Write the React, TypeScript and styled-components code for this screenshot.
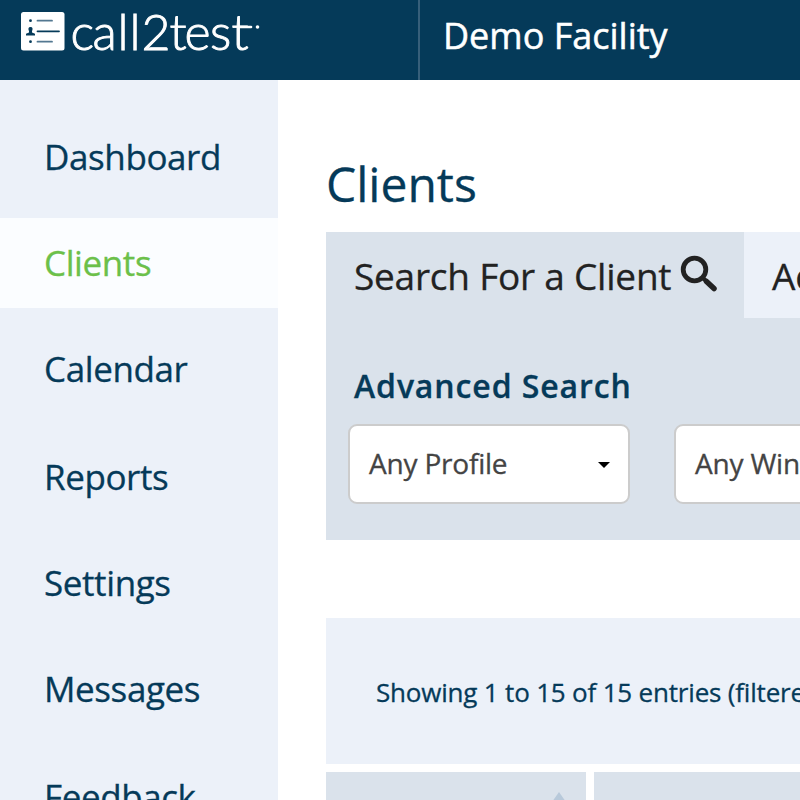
import React from "react";
import styled, { createGlobalStyle } from "styled-components";

const navy = "#053a59";
const pale = "#ecf1f9";
const steel = "#dae2eb";

const GlobalStyle = createGlobalStyle`
  * { box-sizing: border-box; }
  body {
    margin: 0;
    overflow: hidden;
    background: #fff;
    font-family: "Open Sans", "Noto Sans", sans-serif;
    color: ${navy};
    -webkit-text-stroke: 0.3px currentColor;
  }
`;

const Page = styled.div`
  width: 800px;
  height: 800px;
  overflow: hidden;
  display: flex;
  flex-direction: column;
`;

const Header = styled.header`
  display: flex;
  flex: 0 0 80px;
  background: ${navy};
`;

const Brand = styled.div`
  flex: 0 0 418px;
`;

const LogoMark = styled.svg`
  display: block;
`;

const Facility = styled.div`
  flex: 1;
  border-left: 2px solid #375f7a;
  padding: 11px 0 0 23px;
  color: #fff;
  font-size: 36px;
  line-height: 49px;
  -webkit-text-stroke-width: 0.5px;
  white-space: nowrap;
`;

const Body = styled.div`
  display: flex;
  flex: 1;
  min-height: 0;
`;

const Sidebar = styled.nav`
  flex: 0 0 278px;
  padding-top: 32px;
  background: ${pale};
  display: flex;
  flex-direction: column;
`;

const NavItem = styled.a<{ $active?: boolean; $gap?: number }>`
  flex: 0 0 90px;
  height: 90px;
  margin-bottom: ${(p) => p.$gap ?? 16}px;
  padding-left: 44px;
  font-size: 35px;
  letter-spacing: -0.4px;
  line-height: 90px;
  color: ${(p) => (p.$active ? "#6cc04a" : navy)};
  background: ${(p) => (p.$active ? "#fbfdff" : "transparent")};
`;

const Main = styled.main`
  flex: 0 0 auto;
  width: 900px;
  padding: 72px 0 0 48px;
`;

const Title = styled.h1`
  margin: 0;
  height: 80px;
  font-size: 48px;
  line-height: 64px;
  font-weight: 400;
`;

const SearchPanel = styled.section`
  height: 308px;
  background: ${steel};
`;

const Tabs = styled.div`
  display: flex;
  height: 86px;
  color: #222;
  font-size: 37px;
  letter-spacing: -0.23px;
  line-height: 87px;
  white-space: nowrap;
`;

const Tab = styled.div<{ $active?: boolean }>`
  display: flex;
  align-items: flex-start;
  flex: 0 0 418px;
  height: 86px;
  padding-left: 28px;
  background: ${(p) => (p.$active ? steel : pale)};
`;

const SearchIcon = styled.svg`
  margin: 23px 0 0 9px;
  width: 38px;
  height: 38px;
`;

const SubTitle = styled.h2`
  margin: 0;
  padding: 46px 0 0 28px;
  height: 106px;
  font-size: 32px;
  line-height: 44px;
  font-weight: 600;
  letter-spacing: 0.9px;
`;

const Filters = styled.div`
  display: flex;
  gap: 44px;
  padding-left: 22px;
`;

const Select = styled.div`
  display: flex;
  align-items: center;
  justify-content: space-between;
  width: 282px;
  height: 80px;
  padding: 0 18px 2px 19px;
  border: 2px solid #ccc;
  border-radius: 9px;
  background: #fff;
  color: #444;
  font-size: 28px;
  letter-spacing: -0.2px;
  white-space: nowrap;
`;

const Caret = styled.i`
  margin-top: 3px;
  border: 6px solid transparent;
  border-top-color: #000;
  border-bottom: 0;
`;

const Summary = styled.div`
  height: 146px;
  margin: 78px 0 8px;
  padding-left: 50px;
  background: ${pale};
  font-size: 26px;
  letter-spacing: -0.19px;
  line-height: 149px;
  white-space: nowrap;
`;

const Columns = styled.div`
  display: flex;
  gap: 8px;
`;

const Column = styled.div`
  display: flex;
  justify-content: flex-end;
  width: 260px;
  height: 60px;
  padding: 20px 20px 0 0;
  background: ${steel};
`;

const SortArrow = styled.i`
  width: 0;
  height: 0;
  border: 7px solid transparent;
  border-bottom: 10px solid #b8c9da;
  border-top: 0;
`;

const links = [
  { label: "Dashboard" },
  { label: "Clients", active: true },
  { label: "Calendar", gap: 18 },
  { label: "Reports" },
  { label: "Settings" },
  { label: "Messages", gap: 18 },
  { label: "Feedback" },
];

function Logo() {
  return (
    <LogoMark width="280" height="80" viewBox="0 0 280 80" aria-label="call2test">
      <rect x="21" y="12" width="43.5" height="38.5" rx="2.5" fill="#fff" />
      <g stroke={navy} strokeWidth="1.8" strokeLinecap="round">
        <path d="M37.5 20.7H52M37.5 41.7H52" stroke="#537891" />
        <path d="M37.5 31.3H59" />
      </g>
      <g fill={navy}>
        <circle cx="30.5" cy="20.7" r="1.4" />
        <circle cx="30.5" cy="41.7" r="1.4" />
        <path d="M26 35.5v-1.7l3-1.2v-1.4c-1-2.5-.8-4.2 1.5-4.2s2.5 1.7 1.5 4.2v1.4l3 1.2v1.7z" />
      </g>
      <text
        x="70.5 92.5 117.5 129.5 141.5 169.5 184.5 210 231.5"
        y="50"
        fill="#fff"
        stroke="#fff"
        strokeWidth="0.9"
        fontFamily="Lato, sans-serif"
        fontWeight="300"
        fontSize="50"
      >
        call2test
      </text>
      <path d="M238 27H251" stroke="#fff" strokeWidth="2.6" strokeLinecap="round" />
      <circle cx="257.5" cy="27" r="1.8" fill="#fff" />
    </LogoMark>
  );
}

export default function App() {
  return (
    <>
      <GlobalStyle />
      <Page>
        <Header>
          <Brand><Logo /></Brand>
          <Facility>Demo Facility</Facility>
        </Header>
        <Body>
          <Sidebar>
            {links.map((link) => (
              <NavItem key={link.label} $active={link.active} $gap={link.gap}>
                {link.label}
              </NavItem>
            ))}
          </Sidebar>
          <Main>
            <Title>Clients</Title>
            <SearchPanel>
              <Tabs>
                <Tab $active>
                  Search For a Client
                  <SearchIcon viewBox="0 0 38 38" fill="none" stroke="#222">
                    <circle cx="14.5" cy="14.5" r="11.3" strokeWidth="4.8" />
                    <path d="M23.5 23.5L27 27" strokeWidth="4" />
                    <path d="M26.5 26.5L34 33.5" strokeWidth="5.5" strokeLinecap="round" />
                  </SearchIcon>
                </Tab>
                <Tab>Add Client</Tab>
              </Tabs>
              <SubTitle>Advanced Search</SubTitle>
              <Filters>
                <Select>Any Profile<Caret /></Select>
                <Select>Any Window<Caret /></Select>
              </Filters>
            </SearchPanel>
            <Summary>Showing 1 to 15 of 15 entries (filtered)</Summary>
            <Columns>
              <Column><SortArrow /></Column>
              <Column />
            </Columns>
          </Main>
        </Body>
      </Page>
    </>
  );
}
